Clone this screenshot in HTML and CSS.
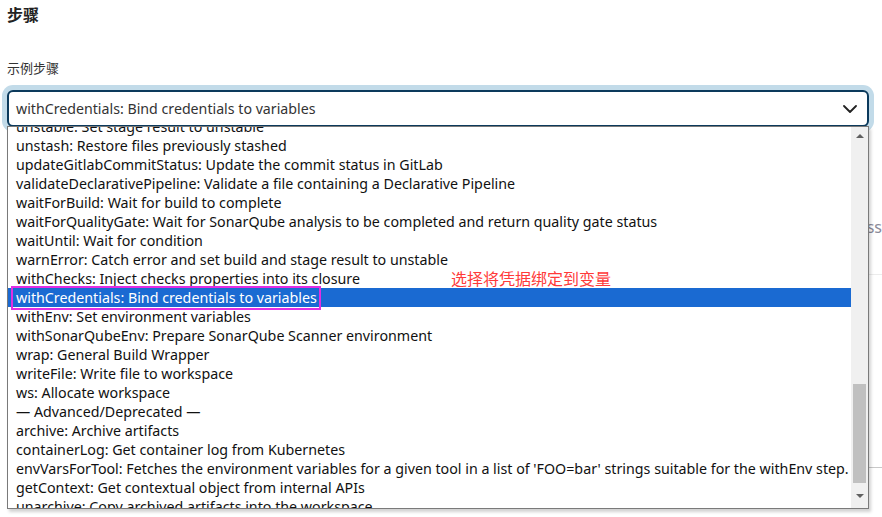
FILE: index.html
```html
<!DOCTYPE html>
<html lang="zh">
<head>
<meta charset="utf-8">
<title>步骤</title>
<link rel="stylesheet" href="styles.css">
</head>
<body>
<div class="page">
  <h2 class="title">步骤</h2>
  <div class="field">
    <div class="label">示例步骤</div>
    <div class="select-wrap">
      <div class="select">
        <span class="select-text">withCredentials: Bind credentials to variables</span>
        <svg class="chevron" width="14" height="8" viewBox="0 0 14 8"><path d="M1 1 L7 7 L13 1" fill="none" stroke="#222" stroke-width="1.8" stroke-linecap="round" stroke-linejoin="round"/></svg>
      </div>
      <div class="dropdown">
        <div class="options">
          <div class="opt first">unstable: Set stage result to unstable</div>
          <div class="opt">unstash: Restore files previously stashed</div>
          <div class="opt">updateGitlabCommitStatus: Update the commit status in GitLab</div>
          <div class="opt">validateDeclarativePipeline: Validate a file containing a Declarative Pipeline</div>
          <div class="opt">waitForBuild: Wait for build to complete</div>
          <div class="opt">waitForQualityGate: Wait for SonarQube analysis to be completed and return quality gate status</div>
          <div class="opt">waitUntil: Wait for condition</div>
          <div class="opt">warnError: Catch error and set build and stage result to unstable</div>
          <div class="opt">withChecks: Inject checks properties into its closure</div>
          <div class="opt selected">withCredentials: Bind credentials to variables</div>
          <div class="opt">withEnv: Set environment variables</div>
          <div class="opt">withSonarQubeEnv: Prepare SonarQube Scanner environment</div>
          <div class="opt">wrap: General Build Wrapper</div>
          <div class="opt">writeFile: Write file to workspace</div>
          <div class="opt">ws: Allocate workspace</div>
          <div class="opt">— Advanced/Deprecated —</div>
          <div class="opt">archive: Archive artifacts</div>
          <div class="opt">containerLog: Get container log from Kubernetes</div>
          <div class="opt">envVarsForTool: Fetches the environment variables for a given tool in a list of 'FOO=bar' strings suitable for the withEnv step.</div>
          <div class="opt">getContext: Get contextual object from internal APIs</div>
          <div class="opt">unarchive: Copy archived artifacts into the workspace</div>
        </div>
        <div class="scrollbar">
          <span class="arrow up"></span>
          <span class="thumb"></span>
          <span class="arrow down"></span>
        </div>
        <div class="mark"></div>
        <div class="note">选择将凭据绑定到变量</div>
      </div>
    </div>
  </div>
  <div class="behind">
    <div class="behind-text">Process</div>
    <div class="behind-line light"></div>
    <div class="behind-line dark"></div>
  </div>
</div>
</body>
</html>
```
FILE: styles.css
```css
html, body {
  margin: 0;
  padding: 0;
  background: #fff;
  overflow: hidden;
}
body {
  width: 882px;
  height: 517px;
  font-family: "Noto Sans", "Noto Sans CJK SC", sans-serif;
  color: #333;
}
.page {
  padding: 0 13px 0 7px;
}
.title {
  margin: 0;
  padding-top: 3px;
  font-family: "Noto Sans CJK SC", sans-serif;
  font-size: 16px;
  line-height: 22px;
  font-weight: 700;
  color: #222;
}
.field {
  margin-top: 34px;
}
.label {
  font-family: "Noto Sans CJK SC", sans-serif;
  font-size: 13px;
  line-height: 18px;
  color: #333;
}
.select-wrap {
  position: relative;
  margin-top: 13px;
}
.select {
  box-sizing: border-box;
  height: 37px;
  border: 2px solid #0c3a5c;
  border-radius: 6px;
  box-shadow: 0 0 0 5px #c2dbe9;
  display: flex;
  align-items: center;
  justify-content: space-between;
  padding: 0 10px 0 7px;
  background: #fff;
}
.select-text {
  font-size: 14.2px;
  color: #333;
}
.chevron {
  display: block;
}
.dropdown {
  position: absolute;
  left: 0;
  top: 36px;
  width: 862px;
  height: 383px;
  box-sizing: border-box;
  border: 1px solid #7a7a7a;
  background: #fff;
  box-shadow: 2px 3px 3px rgba(0, 0, 0, 0.18);
  display: flex;
  overflow: hidden;
}
.options {
  flex: 1;
  overflow: hidden;
}
.opt {
  box-sizing: border-box;
  height: 19px;
  padding-top: 1px;
  line-height: 18px;
  padding-left: 8px;
  font-size: 14.25px;
  color: #111;
  white-space: nowrap;
}
.opt.first {
  margin-top: -10px;
}
.opt.selected {
  background: #1a6ad2;
  color: #fff;
}
.scrollbar {
  width: 17px;
  background: #f0f0f0;
  display: flex;
  flex-direction: column;
  align-items: center;
  position: relative;
}
.arrow {
  width: 0;
  height: 0;
  border-left: 4px solid transparent;
  border-right: 4px solid transparent;
}
.arrow.up {
  border-bottom: 4px solid #606060;
  margin-top: 7px;
}
.arrow.down {
  border-top: 4px solid #606060;
  margin-top: 11px;
}
.thumb {
  width: 13px;
  height: 99px;
  background: #c0c0c0;
  margin-top: 246px;
}
.mark {
  position: absolute;
  left: 3px;
  top: 159px;
  width: 310px;
  height: 24px;
  box-sizing: border-box;
  border: 2px solid #e22ee2;
}
.note {
  position: absolute;
  left: 443px;
  top: 141px;
  font-family: "Noto Sans CJK SC", sans-serif;
  font-size: 16px;
  line-height: 20px;
  color: #ff3a3a;
}
.behind {
  margin-top: 90px;
  margin-right: -13px;
}
.behind-text {
  text-align: right;
  font-size: 16px;
  color: #8a8a99;
  line-height: 20px;
}
.behind-line {
  height: 1px;
}
.behind-line.light {
  margin-top: 37px;
  background: #ececec;
}
.behind-line.dark {
  margin-top: 192px;
  background: #c8c8c8;
}
```
